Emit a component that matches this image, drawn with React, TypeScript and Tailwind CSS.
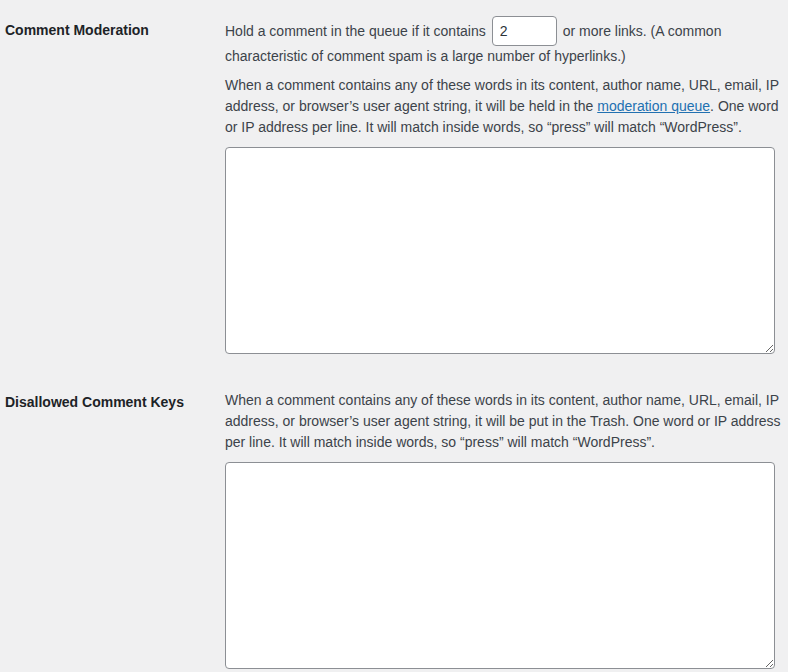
import React from 'react';

const labelClass = "pl-[5px] font-semibold text-[#1d2327] leading-[21px]";

export default function App() {
  return (
    <div className="min-h-screen bg-[#f0f0f1] text-[14px] text-[#3c434a] font-['Liberation_Sans',Arial,sans-serif]">
      {/* Comment Moderation */}
      <div className="grid grid-cols-[225px_550px] pt-[16px]">
        <div className={`${labelClass} pt-[4px]`}>Comment Moderation</div>
        <div>
          <div className="flex items-center h-[30px] whitespace-nowrap">
            <span>Hold a comment in the queue if it contains</span>
            <input
              type="text"
              defaultValue="2"
              className="ml-[6px] mr-[6px] w-[65px] h-[30px] px-[7px] bg-white border border-[#8c8f94] rounded-[4px] text-[#2c3338] outline-none"
            />
            <span>or more links. (A common</span>
          </div>
          <div className="leading-[20px] whitespace-nowrap">characteristic of comment spam is a large number of hyperlinks.)</div>

          <p className="mt-[9px] leading-[21px] whitespace-nowrap">
            When a comment contains any of these words in its content, author name, URL, email, IP
            <br />
            address, or browser’s user agent string, it will be held in the{' '}
            <a href="#" className="text-[#2271b1] underline">moderation queue</a>. One word
            <br />
            or IP address per line. It will match inside words, so “press” will match “WordPress”.
          </p>
          <textarea className="block mt-[9px] w-[550px] h-[207px] bg-white border border-[#8c8f94] rounded-[4px]" />
        </div>
      </div>

      {/* Disallowed Comment Keys */}
      <div className="grid grid-cols-[225px_550px] pt-[36px]">
        <div className={`${labelClass} pt-[2px]`}>Disallowed Comment Keys</div>
        <div>
          <p className="leading-[21px] whitespace-nowrap">
            When a comment contains any of these words in its content, author name, URL, email, IP
            <br />
            address, or browser’s user agent string, it will be put in the Trash. One word or IP address
            <br />
            per line. It will match inside words, so “press” will match “WordPress”.
          </p>
          <textarea className="block mt-[9px] w-[550px] h-[207px] bg-white border border-[#8c8f94] rounded-[4px]" />
        </div>
      </div>
    </div>
  );
}
